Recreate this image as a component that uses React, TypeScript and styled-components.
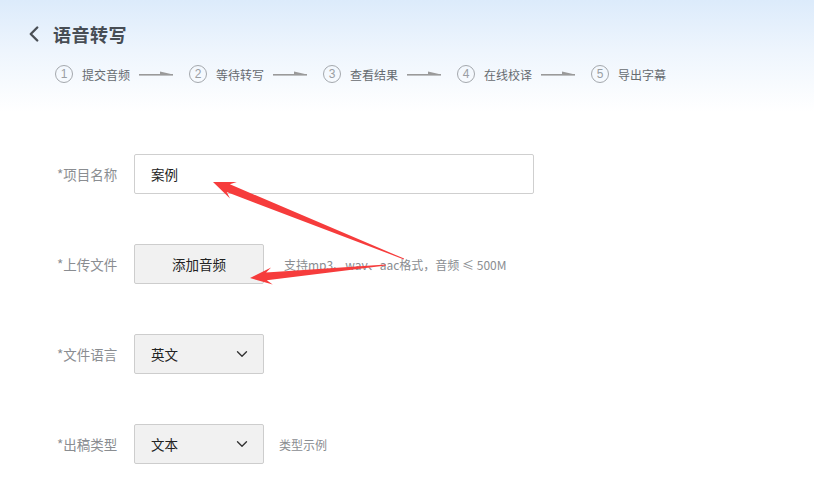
import React from "react";
import styled, { createGlobalStyle } from "styled-components";
import { ChevronDown, ChevronLeft } from "lucide-react";

const Global = createGlobalStyle`
  html, body { margin: 0; padding: 0; background: #fff; }
  body { font-family: "Noto Sans CJK SC", "Noto Sans", "Liberation Sans", sans-serif; }
  * { box-sizing: border-box; }
`;

const Page = styled.div`
  position: relative;
  width: 814px;
  height: 504px;
  overflow: hidden;
  background: #fff;
`;

const Header = styled.div`
  height: 112px;
  padding: 20px 0 0 21px;
  background: linear-gradient(to bottom, #dcebfb 0%, #eef5fd 45%, #ffffff 100%);
`;

const TitleRow = styled.div`
  display: flex;
  align-items: center;
  gap: 6px;
  height: 28px;
  color: #454b52;
`;

const Title = styled.h1`
  margin: 0;
  font-size: 18px;
  font-weight: 700;
  letter-spacing: 0.5px;
  color: #474d54;
`;

const Steps = styled.div`
  display: flex;
  align-items: center;
  margin-top: 16px;
  padding-left: 34px;
  height: 20px;
`;

const Step = styled.div`
  display: flex;
  align-items: center;
  gap: 9px;
`;

const Circle = styled.span`
  width: 18px;
  height: 18px;
  border-radius: 50%;
  border: 1px solid #a4a8ad;
  color: #9a9ea3;
  font-size: 12px;
  font-family: "Liberation Sans", sans-serif;
  display: flex;
  align-items: center;
  justify-content: center;
`;

const StepText = styled.span`
  font-size: 12px;
  color: #666b70;
  width: 48px;
  white-space: nowrap;
`;

const StepArrowBox = styled.span`
  display: flex;
  margin-right: 16px;
`;

const Form = styled.div`
  display: flex;
  flex-direction: column;
  gap: 50px;
  padding: 42px 0 0 57px;
`;

const Row = styled.div`
  display: flex;
  align-items: center;
  height: 40px;
`;

const Label = styled.span`
  width: 77px;
  font-size: 13.5px;
  color: #8a8d91;
  white-space: nowrap;
`;

const TextInput = styled.div`
  width: 400px;
  height: 40px;
  border: 1px solid #cfcfcf;
  border-radius: 2px;
  padding-left: 16px;
  display: flex;
  align-items: center;
  font-size: 13.5px;
  color: #222;
`;

const GrayButton = styled.div`
  width: 130px;
  height: 40px;
  border: 1px solid #cdcdcd;
  border-radius: 2px;
  background: #f1f1f1;
  display: flex;
  align-items: center;
  justify-content: center;
  font-size: 13.5px;
  color: #222;
`;

const Select = styled.div`
  width: 130px;
  height: 40px;
  border: 1px solid #cdcdcd;
  border-radius: 2px;
  background: #f1f1f1;
  display: flex;
  align-items: center;
  justify-content: space-between;
  padding: 0 12px 0 16px;
  font-size: 13.5px;
  color: #222;
`;

const Hint = styled.span<{ $gap: number }>`
  margin-left: ${(p) => p.$gap}px;
  font-size: 12px;
  color: #8a8d91;
  white-space: nowrap;
`;

const Overlay = styled.svg`
  position: absolute;
  left: 0;
  top: 0;
  pointer-events: none;
`;

const StepArrow = () => (
  <svg width="34" height="8" viewBox="0 0 34 8">
    <rect x="0" y="4" width="34" height="1.6" fill="#9a9a9a" />
    <polygon points="21,1.5 34,4.5 21,4.5" fill="#9a9a9a" />
  </svg>
);

type Pt = [number, number];

function arrowPoints(tail: Pt, tip: Pt, headLen: number, headHalf: number, shaftHalf: number, tailHalf: number) {
  const dx = tip[0] - tail[0];
  const dy = tip[1] - tail[1];
  const len = Math.hypot(dx, dy);
  const ux = dx / len;
  const uy = dy / len;
  const nx = -uy;
  const ny = ux;
  const bx = tip[0] - ux * headLen;
  const by = tip[1] - uy * headLen;
  const nbx = tip[0] - ux * headLen * 0.75;
  const nby = tip[1] - uy * headLen * 0.75;
  const pts: Pt[] = [
    tip,
    [bx + nx * headHalf, by + ny * headHalf],
    [nbx + nx * shaftHalf, nby + ny * shaftHalf],
    [tail[0] + nx * tailHalf, tail[1] + ny * tailHalf],
    [tail[0] - nx * tailHalf, tail[1] - ny * tailHalf],
    [nbx - nx * shaftHalf, nby - ny * shaftHalf],
    [bx - nx * headHalf, by - ny * headHalf],
  ];
  return pts.map((p) => `${p[0].toFixed(1)},${p[1].toFixed(1)}`).join(" ");
}

const steps = ["提交音频", "等待转写", "查看结果", "在线校译", "导出字幕"];

export default function App() {
  return (
    <Page>
      <Global />
      <Header>
        <TitleRow>
          <ChevronLeft size={26} strokeWidth={2.2} color="#4a4f55" />
          <Title>语音转写</Title>
        </TitleRow>
        <Steps>
          {steps.map((s, i) => (
            <Step key={s}>
              <Circle>{i + 1}</Circle>
              <StepText>{s}</StepText>
              {i < steps.length - 1 && (
                <StepArrowBox>
                  <StepArrow />
                </StepArrowBox>
              )}
            </Step>
          ))}
        </Steps>
      </Header>
      <Form>
        <Row>
          <Label>*项目名称</Label>
          <TextInput>案例</TextInput>
        </Row>
        <Row>
          <Label>*上传文件</Label>
          <GrayButton>添加音频</GrayButton>
          <Hint $gap={20}>支持mp3、wav、aac格式，音频 ≤ 500M</Hint>
        </Row>
        <Row>
          <Label>*文件语言</Label>
          <Select>
            英文
            <ChevronDown size={18} strokeWidth={1.8} color="#333" />
          </Select>
        </Row>
        <Row>
          <Label>*出稿类型</Label>
          <Select>
            文本
            <ChevronDown size={18} strokeWidth={1.8} color="#333" />
          </Select>
          <Hint $gap={15}>类型示例</Hint>
        </Row>
      </Form>
      <Overlay width="814" height="504" viewBox="0 0 814 504">
        <polygon points={arrowPoints([404, 259], [213, 182], 22, 9, 4.2, 0.4)} fill="#f63c3c" />
        <polygon points={arrowPoints([386, 265], [250, 278], 22, 8.5, 3.8, 0.4)} fill="#f63c3c" />
      </Overlay>
    </Page>
  );
}
